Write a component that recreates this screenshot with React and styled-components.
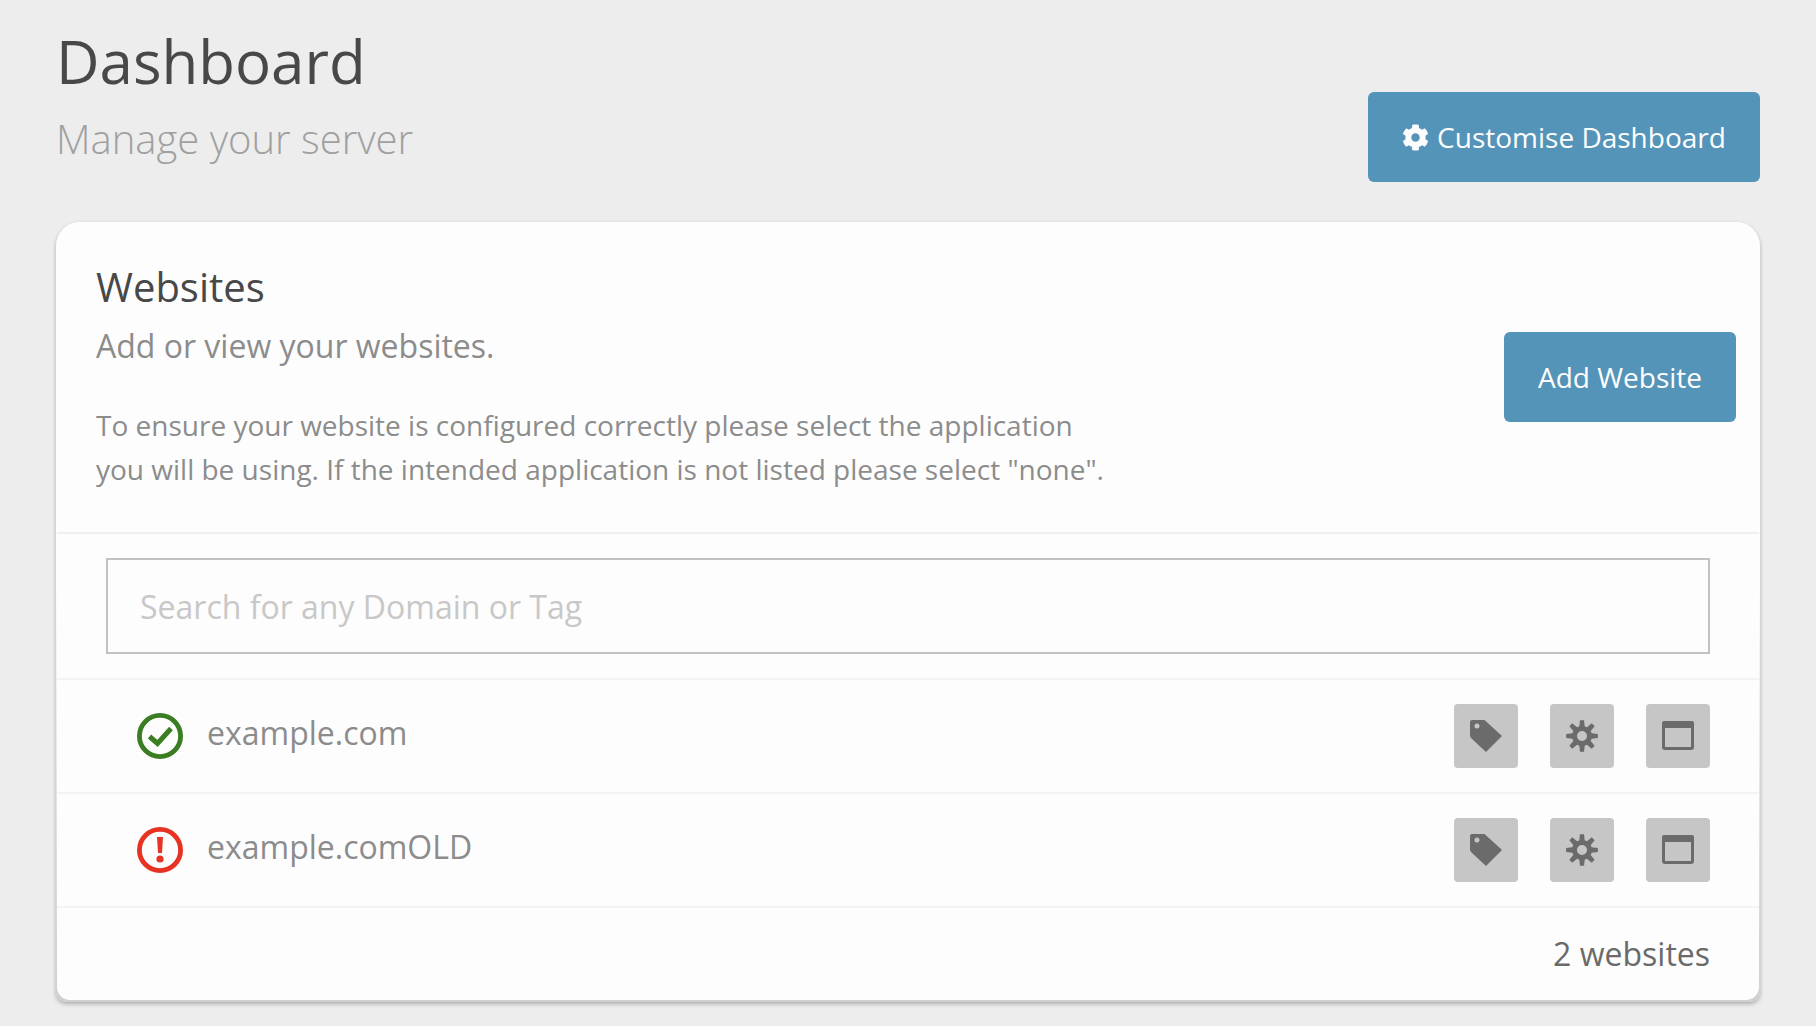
import React from "react"
import styled, { createGlobalStyle } from "styled-components"
import { FaCog } from "react-icons/fa"

const GlobalStyle = createGlobalStyle`
  html, body {
    margin: 0;
    padding: 0;
    background: #ededed;
    font-family: "Open Sans", "Noto Sans", sans-serif;
  }
  * {
    box-sizing: border-box;
  }
`

const Page = styled.div`
  width: 1816px;
  height: 1026px;
  padding: 23px 56px 0;
  overflow: hidden;
`

const PageHeader = styled.header`
  display: flex;
  justify-content: space-between;
  align-items: flex-start;
  height: 199px;
`

const Title = styled.h1`
  margin: 0;
  font-size: 60px;
  line-height: 76px;
  font-weight: 400;
  color: #484848;
`

const Subtitle = styled.p`
  margin: 13px 0 0;
  font-size: 40px;
  line-height: 54px;
  font-weight: 300;
  color: #a0a0a0;
`

const Button = styled.button`
  display: flex;
  align-items: center;
  justify-content: center;
  gap: 8px;
  height: 90px;
  width: ${(p) => p.$width}px;
  margin-top: ${(p) => p.$top}px;
  border: 0;
  border-radius: 6px;
  background: #5594b9;
  color: #fdfdfd;
  font-family: inherit;
  font-size: 28px;
  font-weight: 400;
  svg {
    width: 27px;
    height: 27px;
  }
`

const Card = styled.section`
  height: 780px;
  padding: 0 1px 2px;
  background: linear-gradient(to bottom, #fdfdfd 0, #fdfdfd 45%, #cfcfcf 100%);
  border-radius: 24px 24px 10px 10px;
  box-shadow: 0 2px 4px rgba(0, 0, 0, 0.28);
`

const Panel = styled.div`
  height: 100%;
  background: #fdfdfd;
  border-radius: 24px 24px 13px 13px;
  overflow: hidden;
`

const CardHead = styled.div`
  display: flex;
  justify-content: space-between;
  align-items: flex-start;
  height: 312px;
  padding: 0 23px 0 39px;
  border-bottom: 2px solid #f0f0f0;
`

const CardTitle = styled.h2`
  margin: 38px 0 0;
  font-size: 40px;
  line-height: 54px;
  font-weight: 400;
  color: #484848;
`

const CardLead = styled.p`
  margin: 10px 0 0;
  font-size: 32px;
  line-height: 44px;
  font-weight: 400;
  color: #8c8c8c;
`

const CardNote = styled.p`
  margin: 35px 0 0;
  font-size: 28px;
  line-height: 44px;
  font-weight: 400;
  color: #8c8c8c;
`

const SearchRow = styled.div`
  height: 146px;
  padding: 24px 49px 0;
  border-bottom: 2px solid #f3f3f3;
`

const SearchInput = styled.input`
  display: block;
  width: 100%;
  height: 96px;
  padding: 0 32px;
  border: 2px solid #c2c2c2;
  border-radius: 0;
  outline: none;
  background: transparent;
  font-family: inherit;
  font-size: 32px;
  color: #555555;
  &::placeholder {
    color: #c8c8c8;
    opacity: 1;
  }
`

const SiteRow = styled.div`
  display: flex;
  align-items: center;
  height: 114px;
  padding: 0 49px 0 80px;
  border-bottom: 2px solid #f3f3f3;
`

const StatusIcon = styled.svg`
  width: 46px;
  height: 46px;
  flex: none;
  margin-right: 24px;
`

const SiteName = styled.span`
  flex: 1;
  font-size: 32px;
  line-height: 44px;
  margin-top: -6px;
  color: #8c8c8c;
`

const Actions = styled.div`
  display: flex;
  gap: 32px;
`

const ActionButton = styled.button`
  display: flex;
  align-items: center;
  justify-content: center;
  width: 64px;
  height: 64px;
  padding: 0;
  border: 0;
  border-radius: 4px;
  background: #c6c6c6;
  svg {
    width: 32px;
    height: 32px;
    fill: #6b6b6b;
  }
`

const CardFoot = styled.div`
  padding: 24px 49px 0 0;
  text-align: right;
  font-size: 32px;
  line-height: 44px;
  color: #6a6a6a;
`

const TagIcon = () => (
  <svg viewBox="0 0 32 32">
    <path
      fillRule="evenodd"
      d="M2 0H14.5L32 16L16 32L1.5 18.5Q0 17 0 15V2Q0 0 2 0ZM7 3.5A2.5 2.5 0 1 0 7 8.5A2.5 2.5 0 1 0 7 3.5Z"
    />
  </svg>
)

const gearPath = () => {
  const pts = []
  for (let i = 0; i < 8; i++) {
    const a = (i * Math.PI) / 4 - Math.PI / 2
    const at = (r, off) => {
      const x = 16 + r * Math.cos(a + off)
      const y = 16 + r * Math.sin(a + off)
      return `${x.toFixed(2)} ${y.toFixed(2)}`
    }
    pts.push(at(10, -0.27), at(16, -0.13), at(16, 0.13), at(10, 0.27))
  }
  return `M${pts.join("L")}ZM16 11A5 5 0 1 0 16 21A5 5 0 1 0 16 11Z`
}

const GearIcon = () => (
  <svg viewBox="0 0 32 32">
    <path fillRule="evenodd" d={gearPath()} />
  </svg>
)

const WindowIcon = () => (
  <svg viewBox="0 0 32 32">
    <path
      fillRule="evenodd"
      d="M2 1H30Q32 1 32 3V27Q32 30 29 30H3Q0 30 0 27V3Q0 1 2 1ZM3 8V27H29V8Z"
    />
  </svg>
)

const OkIcon = () => (
  <StatusIcon viewBox="0 0 46 46">
    <circle cx="23" cy="23" r="20.6" fill="none" stroke="#3a7d23" strokeWidth="4.8" />
    <path d="M12.5 23.5L20.5 30.5L34 15.5" fill="none" stroke="#3a7d23" strokeWidth="5" />
  </StatusIcon>
)

const ErrorIcon = () => (
  <StatusIcon viewBox="0 0 46 46">
    <circle cx="23" cy="23" r="20.6" fill="none" stroke="#e63323" strokeWidth="4.8" />
    <path d="M20 10H26L25 26H21Z" fill="#e63323" />
    <circle cx="23" cy="32" r="3.6" fill="#e63323" />
  </StatusIcon>
)

const sites = [
  { name: "example.com", ok: true },
  { name: "example.comOLD", ok: false },
]

const App = () => {
  return (
    <Page>
      <GlobalStyle />
      <PageHeader>
        <div>
          <Title>Dashboard</Title>
          <Subtitle>Manage your server</Subtitle>
        </div>
        <Button $width={392} $top={69}>
          <FaCog />
          Customise Dashboard
        </Button>
      </PageHeader>
      <Card>
        <Panel>
          <CardHead>
            <div>
              <CardTitle>Websites</CardTitle>
              <CardLead>Add or view your websites.</CardLead>
              <CardNote>
                To ensure your website is configured correctly please select the application
                <br />
                you will be using. If the intended application is not listed please select "none".
              </CardNote>
            </div>
            <Button $width={232} $top={110}>Add Website</Button>
          </CardHead>
          <SearchRow>
            <SearchInput placeholder="Search for any Domain or Tag" />
          </SearchRow>
          {sites.map((site) => (
            <SiteRow key={site.name}>
              {site.ok ? <OkIcon /> : <ErrorIcon />}
              <SiteName>{site.name}</SiteName>
              <Actions>
                <ActionButton><TagIcon /></ActionButton>
                <ActionButton><GearIcon /></ActionButton>
                <ActionButton><WindowIcon /></ActionButton>
              </Actions>
            </SiteRow>
          ))}
          <CardFoot>2 websites</CardFoot>
        </Panel>
      </Card>
    </Page>
  )
}

export default App
